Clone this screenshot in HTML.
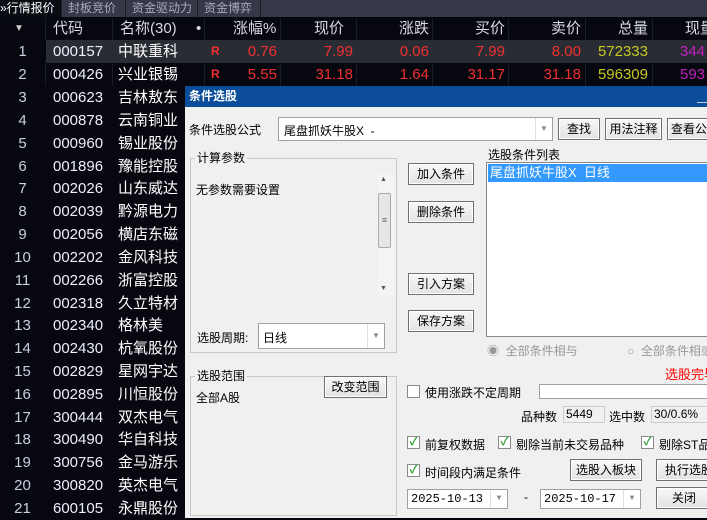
<!DOCTYPE html>
<html><head><meta charset="utf-8"><style>
*{margin:0;padding:0;box-sizing:border-box}
body{width:707px;height:518px;overflow:hidden;background:#06070f;font-family:"Liberation Sans","Noto Sans CJK SC",sans-serif;position:relative}
.a{position:absolute;white-space:nowrap}
.tabs{left:0;top:0;width:707px;height:17px;background:#343847}
.tab{top:0;height:17px;font-size:12px;color:#aab;line-height:17px;padding-left:6px;border-right:1px solid #1c1e26}
.hdr{font-size:15px;color:#d8d8e0;top:19px;line-height:20px}
.row{left:0;width:185px;height:23px;font-size:15px;line-height:23px}
.idx{color:#c8d0e0;position:absolute;left:0;width:45px;text-align:center}
.code{color:#eef;position:absolute;left:53px}
.name{color:#fff;position:absolute;left:118px}
.num{font-size:15px;line-height:23px;text-align:right}
.r{color:#f03030}
.dlg{left:185px;top:86px;width:522px;height:432px;background:#f0f0f0;font-size:12px;color:#000}
.t{position:absolute;white-space:nowrap}
.btn{position:absolute;border:1px solid #707070;background:linear-gradient(#f8f8f8,#e2e2e2);text-align:center;line-height:20px;font-size:12px;box-shadow:inset 0 0 0 1px #fff}
.box{position:absolute;background:#fff;border:1px solid #a0a0a0}
.grp{position:absolute;border:1px solid #c8c8c8}
.cb{position:absolute;width:13px;height:13px;border:1px solid #8a8a8a;background:#fff;font-size:11px;line-height:11px;color:#2a9a2a;text-align:center;font-weight:bold}
.dd{position:absolute;right:0;top:0;width:17px;height:100%;border-left:1px solid #ddd;color:#888;font-size:8px;text-align:center}
.vl{position:absolute;top:18px;width:1px;height:68px;background:#1a1c26}
</style></head><body>
<div class="a tabs"></div>
<div class="a tab" style="left:0;width:62px;background:#0a0c14;color:#fff;padding-left:0">»行情报价</div>
<div class="a tab" style="left:62px;width:64px">封板竞价</div>
<div class="a tab" style="left:126px;width:72px">资金驱动力</div>
<div class="a tab" style="left:198px;width:63px">资金博弈</div>
<div class="vl" style="left:45px"></div><div class="vl" style="left:112px"></div><div class="vl" style="left:204px"></div><div class="vl" style="left:280px"></div><div class="vl" style="left:356px"></div><div class="vl" style="left:432px"></div><div class="vl" style="left:508px"></div><div class="vl" style="left:585px"></div><div class="vl" style="left:652px"></div>
<div class="a hdr" style="left:14px;font-size:10px;color:#ccc">▼</div>
<div class="a hdr" style="left:53px">代码</div>
<div class="a hdr" style="left:120px">名称(30)</div>
<div class="a hdr" style="left:196px">•</div>
<div class="a hdr" style="left:233px">涨幅%</div>
<div class="a hdr" style="left:314px">现价</div>
<div class="a hdr" style="left:399px">涨跌</div>
<div class="a hdr" style="left:475px">买价</div>
<div class="a hdr" style="left:551px">卖价</div>
<div class="a hdr" style="left:618px">总量</div>
<div class="a hdr" style="left:685px">现量</div>
<div class="a" style="left:46px;top:40px;width:661px;height:23px;background:#2a2c34"></div>
<div class="a" style="left:0;top:40px;width:46px;height:23px;background:#06070f"></div>
<div class="a r" style="left:211px;top:44px;font-size:12px;font-weight:bold">R</div>
<div class="a r" style="left:211px;top:67px;font-size:12px;font-weight:bold">R</div>
<div class="a num r" style="left:220px;width:57px;top:40px">0.76</div>
<div class="a num r" style="left:290px;width:63px;top:40px">7.99</div>
<div class="a num r" style="left:360px;width:69px;top:40px">0.06</div>
<div class="a num r" style="left:440px;width:65px;top:40px">7.99</div>
<div class="a num r" style="left:510px;width:71px;top:40px">8.00</div>
<div class="a num" style="left:590px;width:58px;top:40px;color:#c8c820">572333</div>
<div class="a num" style="left:680px;top:40px;color:#c020c0">344</div>
<div class="a num r" style="left:220px;width:57px;top:63px">5.55</div>
<div class="a num r" style="left:290px;width:63px;top:63px">31.18</div>
<div class="a num r" style="left:360px;width:69px;top:63px">1.64</div>
<div class="a num r" style="left:440px;width:65px;top:63px">31.17</div>
<div class="a num r" style="left:510px;width:71px;top:63px">31.18</div>
<div class="a num" style="left:590px;width:58px;top:63px;color:#c8c820">596309</div>
<div class="a num" style="left:680px;top:63px;color:#c020c0">593</div>

<div class="a row" style="top:40px"><span class="idx">1</span><span class="code">000157</span><span class="name">中联重科</span></div>
<div class="a row" style="top:63px"><span class="idx">2</span><span class="code">000426</span><span class="name">兴业银锡</span></div>
<div class="a row" style="top:86px"><span class="idx">3</span><span class="code">000623</span><span class="name">吉林敖东</span></div>
<div class="a row" style="top:109px"><span class="idx">4</span><span class="code">000878</span><span class="name">云南铜业</span></div>
<div class="a row" style="top:132px"><span class="idx">5</span><span class="code">000960</span><span class="name">锡业股份</span></div>
<div class="a row" style="top:155px"><span class="idx">6</span><span class="code">001896</span><span class="name">豫能控股</span></div>
<div class="a row" style="top:177px"><span class="idx">7</span><span class="code">002026</span><span class="name">山东威达</span></div>
<div class="a row" style="top:200px"><span class="idx">8</span><span class="code">002039</span><span class="name">黔源电力</span></div>
<div class="a row" style="top:223px"><span class="idx">9</span><span class="code">002056</span><span class="name">横店东磁</span></div>
<div class="a row" style="top:246px"><span class="idx">10</span><span class="code">002202</span><span class="name">金风科技</span></div>
<div class="a row" style="top:269px"><span class="idx">11</span><span class="code">002266</span><span class="name">浙富控股</span></div>
<div class="a row" style="top:292px"><span class="idx">12</span><span class="code">002318</span><span class="name">久立特材</span></div>
<div class="a row" style="top:314px"><span class="idx">13</span><span class="code">002340</span><span class="name">格林美</span></div>
<div class="a row" style="top:337px"><span class="idx">14</span><span class="code">002430</span><span class="name">杭氧股份</span></div>
<div class="a row" style="top:360px"><span class="idx">15</span><span class="code">002829</span><span class="name">星网宇达</span></div>
<div class="a row" style="top:383px"><span class="idx">16</span><span class="code">002895</span><span class="name">川恒股份</span></div>
<div class="a row" style="top:406px"><span class="idx">17</span><span class="code">300444</span><span class="name">双杰电气</span></div>
<div class="a row" style="top:428px"><span class="idx">18</span><span class="code">300490</span><span class="name">华自科技</span></div>
<div class="a row" style="top:451px"><span class="idx">19</span><span class="code">300756</span><span class="name">金马游乐</span></div>
<div class="a row" style="top:474px"><span class="idx">20</span><span class="code">300820</span><span class="name">英杰电气</span></div>
<div class="a row" style="top:497px"><span class="idx">21</span><span class="code">600105</span><span class="name">永鼎股份</span></div>

<div class="a dlg">
 <div class="t" style="left:0;top:0;width:522px;height:21px;background:#0b4d98;color:#fff;font-weight:bold;font-size:12px;line-height:21px;padding-left:4px">条件选股</div>
 <div class="t" style="right:0;top:16px;width:10px;height:1px;background:#bcd"></div>
 <div class="t" style="left:4px;top:35px">条件选股公式</div>
 <div class="box" style="left:93px;top:31px;width:275px;height:24px;padding:4px 5px">尾盘抓妖牛股X&nbsp;&nbsp;-<span class="dd" style="line-height:22px">▼</span></div>
 <div class="btn" style="left:373px;top:32px;width:42px">查找</div>
 <div class="btn" style="left:420px;top:32px;width:57px">用法注释</div>
 <div class="btn" style="left:482px;top:32px;width:45px;text-align:left;padding-left:3px">查看公</div>
 <div class="grp" style="left:5px;top:72px;width:207px;height:195px"></div>
 <div class="t" style="left:10px;top:63px;background:#f0f0f0;padding:0 2px">计算参数</div>
 <div class="t" style="left:11px;top:95px">无参数需要设置</div>
 <div class="t" style="left:192px;top:87px;width:16px;height:124px;background:#f4f4f4"></div>
 <div class="t" style="left:193px;top:107px;width:13px;height:55px;background:#e6e6e6;border:1px solid #aaa;border-radius:2px;font-size:9px;text-align:center;line-height:52px;color:#666">≡</div>
 <div class="t" style="left:195px;top:90px;font-size:7px;color:#555">▲</div>
 <div class="t" style="left:195px;top:199px;font-size:7px;color:#555">▼</div>
 <div class="t" style="left:12px;top:243px">选股周期:</div>
 <div class="box" style="left:73px;top:237px;width:127px;height:26px;padding:5px 4px">日线<span class="dd" style="line-height:24px">▼</span></div>
 <div class="btn" style="left:223px;top:77px;width:66px">加入条件</div>
 <div class="btn" style="left:223px;top:115px;width:66px">删除条件</div>
 <div class="btn" style="left:223px;top:187px;width:66px">引入方案</div>
 <div class="btn" style="left:223px;top:224px;width:66px">保存方案</div>
 <div class="t" style="left:303px;top:60px">选股条件列表</div>
 <div class="box" style="left:301px;top:76px;width:225px;height:175px;border-color:#888"></div>
 <div class="t" style="left:303px;top:78px;width:222px;height:18px;background:#3399ff;color:#fff;font-size:13px;line-height:18px;padding-left:2px">尾盘抓妖牛股X&nbsp;&nbsp;日线</div>
 <div class="t" style="left:302px;top:256px;color:#999">◉&nbsp;&nbsp;全部条件相与</div>
 <div class="t" style="left:442px;top:256px;color:#999">○&nbsp;&nbsp;全部条件相或</div>
 <div class="t" style="left:480px;top:278px;color:#f00;font-size:13px">选股完毕</div>
 <div class="grp" style="left:5px;top:290px;width:207px;height:140px"></div>
 <div class="t" style="left:10px;top:281px;background:#f0f0f0;padding:0 2px">选股范围</div>
 <div class="t" style="left:11px;top:303px">全部A股</div>
 <div class="btn" style="left:139px;top:290px;width:63px">改变范围</div>
 <div class="cb" style="left:222px;top:299px"></div>
 <div class="t" style="left:240px;top:298px">使用涨跌不定周期</div>
 <div class="box" style="left:354px;top:298px;width:170px;height:15px"></div>
 <div class="t" style="left:336px;top:322px">品种数</div>
 <div class="box" style="left:378px;top:320px;width:42px;height:17px;background:#f0f0f0;padding-left:2px;line-height:15px;border-color:#ccc">5449</div>
 <div class="t" style="left:424px;top:322px">选中数</div>
 <div class="box" style="left:466px;top:320px;width:60px;height:17px;background:#f0f0f0;padding-left:2px;line-height:15px;border-color:#ccc">30/0.6%</div>
 <div class="cb" style="left:222px;top:350px">✓</div><div class="t" style="left:240px;top:350px">前复权数据</div>
 <div class="cb" style="left:313px;top:350px">✓</div><div class="t" style="left:331px;top:350px">剔除当前未交易品种</div>
 <div class="cb" style="left:456px;top:350px">✓</div><div class="t" style="left:474px;top:350px">剔除ST品</div>
 <div class="cb" style="left:222px;top:378px">✓</div><div class="t" style="left:240px;top:378px">时间段内满足条件</div>
 <div class="btn" style="left:385px;top:373px;width:72px">选股入板块</div>
 <div class="btn" style="left:471px;top:373px;width:56px;text-align:left;padding-left:8px">执行选股</div>
 <div class="box" style="left:222px;top:403px;width:101px;height:20px;padding:2px 3px;font-family:'Liberation Mono',monospace">2025-10-13<span class="dd" style="line-height:18px">▼</span></div>
 <div class="t" style="left:339px;top:404px">-</div>
 <div class="box" style="left:355px;top:403px;width:101px;height:20px;padding:2px 3px;font-family:'Liberation Mono',monospace">2025-10-17<span class="dd" style="line-height:18px">▼</span></div>
 <div class="btn" style="left:471px;top:401px;width:56px">关闭</div>
</div>
</body></html>
